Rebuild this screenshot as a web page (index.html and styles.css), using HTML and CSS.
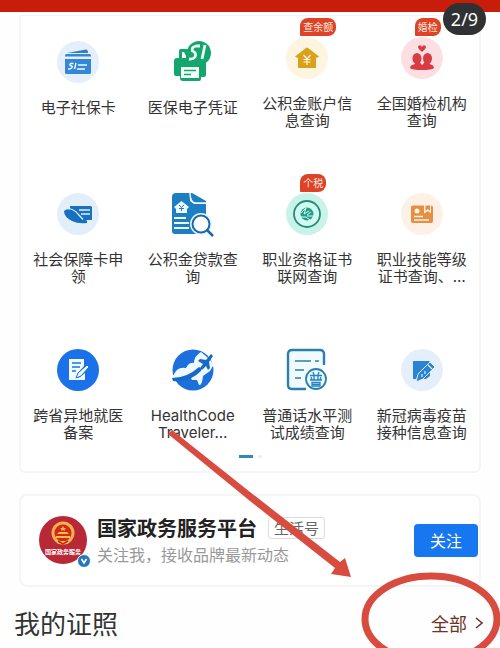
FILE: index.html
```html
<!DOCTYPE html>
<html lang="zh-CN">
<head>
<meta charset="utf-8">
<meta name="viewport" content="width=device-width, initial-scale=1">
<title>国家政务服务平台</title>
<link rel="stylesheet" href="styles.css">
</head>
<body>
<div class="page">
  <header class="topbar"><span class="counter">2/9</span></header>

  <main>
    <section class="card services">
      <div class="grid">
        <a class="item short" href="#">
          <svg class="icon" viewBox="0 0 42 42"><circle cx="21" cy="21" r="21" fill="#e4effb"/><path d="M10 12 29 8.500Q31 8.500 31 12Z" fill="#347fb9"/><path d="M8 14.500Q8 13 9.500 13H32.500Q34 13 34 14.500V15.500H8ZM8 18H34V31.500Q34 33 32.500 33H9.500Q8 33 8 31.500Z" fill="#3486d6"/><path d="M16.500 22.500H13.500Q12 24.500 14.500 25T13 28H11M19 22 17.500 28M21 24H30M20 28H28" fill="none" stroke="#f2faff" stroke-width="1.400"/></svg>
          <span class="label">电子社保卡</span>
        </a>
        <a class="item short" href="#">
          <svg class="icon" viewBox="0 0 42 42"><path d="M7 17V10Q7 8 9 8H18V18H7Z" fill="#14a66c"/><path d="M10 17V11H12L14 15V17Z" fill="#fff"/><path d="M5 17H31Q34 17 34 20V34Q34 36 32 36H29V38Q29 40 27 40H11Q8 40 8 37V35H4Q2 35 2 33V20Q2 17 5 17Z" fill="#14a66c"/><circle cx="27" cy="12" r="12" fill="#14a66c"/><path d="M28 5H24Q19 6 20.500 10Q25 12 23 16Q21 18.500 17 18M33 4 30 18" fill="none" stroke="#effff8" stroke-width="2.800"/><path d="M9 26H27V37H9Z" fill="#f3fff9"/><path d="M12 29.500H24M12 33.500H19" stroke="#14a66c" stroke-width="1.600"/></svg>
          <span class="label">医保电子凭证</span>
        </a>
        <a class="item" href="#">
          <span class="badge">查余额</span>
          <svg class="icon" viewBox="0 0 42 42"><circle cx="21" cy="21" r="21" fill="#fdf5df"/><path d="M9 19.500 20 11Q21 10 22 11L33 19.500 31 21 30 20V31H12V20L11 21Z" fill="#daa11d"/><path d="M17.500 18 21 22 24.500 18M21 22V28M17.500 22.500H24.500M17.500 25H24.500" stroke="#fff8df" stroke-width="1.200" fill="none"/></svg>
          <span class="label">公积金账户信<br>息查询</span>
        </a>
        <a class="item" href="#">
          <span class="badge">婚检</span>
          <svg class="icon" viewBox="0 0 42 42"><circle cx="21" cy="21" r="21" fill="#fbdfe2"/><g fill="#d93b42"><path d="M21 15Q15 10 18 8.500Q20 7.500 21 10Q22 7.500 24 8.500Q27 10 21 15Z"/><ellipse cx="16" cy="21.500" rx="4.500" ry="5.500"/><ellipse cx="26.500" cy="21.500" rx="4.500" ry="5.500"/><path d="M14 25H18.500L21 28 24 25H28.500V27Q33 28 33 31Q31 33 21 33T9 31Q9 28 14 27Z"/></g></svg>
          <span class="label">全国婚检机构<br>查询</span>
        </a>

        <a class="item" href="#">
          <svg class="icon" viewBox="0 0 42 42"><circle cx="21" cy="21" r="21" fill="#e2eef9"/><path d="M13 13H34L35 14V27H22L13 18Z" fill="#1c71bd"/><path d="M22 17H33M24 21H33" stroke="#d9efff" stroke-width="1.400"/><path d="M7 18Q10 15 14 17Q18 19 21 23Q24 26 30 27.500V30Q21 31 15 28Q7 24 7 18Z" fill="#176fc1"/><path d="M12 15.500Q18 17 21 21L26 26.500" fill="none" stroke="#e2f4ff" stroke-width="1.200"/></svg>
          <span class="label">社会保障卡申<br>领</span>
        </a>
        <a class="item" href="#">
          <svg class="icon" viewBox="0 0 42 42"><path d="M4 0H18V8L22 11H34V38Q34 41 31 41H3Q0 41 0 38V4Q0 0 4 0Z" fill="#1d7fc1"/><path d="M20 0 34 8V10H24Q18 9 18 0Z" fill="#1d7fc1"/><path d="M18 0Q18 10 24 10H34" fill="none" stroke="#e8f8ff" stroke-width="1.500"/><path d="M2 14 9.500 8 17 14 15 16V20H4V16Z" fill="#edf9ff"/><path d="M7 12 9.500 14.500 12 12M9.500 14.500V18M7 15.500H12" fill="none" stroke="#1d7fc1"/><path d="M2 25H14M2 30H17M2 35H17" stroke="#edf9ff" stroke-width="1.800"/><circle cx="29" cy="31" r="11" fill="#e6f7ff"/><path d="m35 37 6 6" stroke="#1769ac" stroke-width="2.500"/><circle cx="29" cy="31" r="8.500" fill="#fff" stroke="#1769ac" stroke-width="2"/></svg>
          <span class="label">公积金贷款查<br>询</span>
        </a>
        <a class="item" href="#">
          <span class="badge">个税</span>
          <svg class="icon" viewBox="0 0 42 42"><circle cx="21" cy="21" r="21" fill="#c9f2e9"/><circle cx="21" cy="21" r="13" fill="#d2faf0" stroke="#258c7c" stroke-width="1.800"/><circle cx="21" cy="21" r="6.500" fill="#229d88"/><path d="M15 20 20 15 18 21 23 18M21 22 25 19M15 24H20L24 27M21 23H27" fill="none" stroke="#d2faf0"/></svg>
          <span class="label">职业资格证书<br>联网查询</span>
        </a>
        <a class="item" href="#">
          <svg class="icon" viewBox="0 0 42 42"><circle cx="21" cy="21" r="21" fill="#fdf1e7"/><path d="M12 12.500H23V20.500L27 18 30 20.500V12.500Q32 12.500 32 14V28Q32 30 30 30H12Q10 30 10 28V14.500Q10 12.500 12 12.500Z" fill="#e68e42"/><path d="M24.500 12.500H29V18L27 16 24.500 18Z" fill="#e68e42"/><path d="M13 23.500H22M13 27H28" stroke="#fff1e3" stroke-width="1.500"/><circle cx="16" cy="18" r="2.500" fill="#fff1e3"/></svg>
          <span class="label">职业技能等级<br>证书查询、…</span>
        </a>

        <a class="item" href="#">
          <svg class="icon" viewBox="0 0 42 42"><circle cx="21" cy="21" r="21" fill="#1b71e9"/><path d="M12 10H27V17L20 25V29L23 28 28 24V31H12Z" fill="#f0faff"/><path d="M15 14H24M15 18H23M15 22H19" stroke="#1b71e9" stroke-width="1.400"/><path d="m19 29 2-5 9-8 2 2-8 9Z" fill="#f0faff" stroke="#1b71e9"/></svg>
          <span class="label">跨省异地就医<br>备案</span>
        </a>
        <a class="item" href="#">
          <svg class="icon" viewBox="0 0 42 42"><circle cx="21" cy="21" r="20.500" fill="#1c70dc"/><path d="M1 27Q5 17 14 19Q17 13 22 14Q22 7 29 3L35 8 42 15 38 22 31 27Q30 37 27 36L25 31 20 31 18 27 9 31 0 32Z" fill="#effaff"/><path d="M0 29Q15 29 27 18Q30 19 29 22Q17 34 1 32Z" fill="#1769c8"/><path d="M31 15 26 12 28 10 34 11 39 5 41 7 37 13 38 19 36 21 34 17 30 21 28 19Z" fill="#1769c8"/></svg>
          <span class="label">HealthCode<br>Traveler…</span>
        </a>
        <a class="item" href="#">
          <svg class="icon" viewBox="0 0 42 42"><path d="M38 16V5Q38 1 34 1H6Q2 1 2 5V36Q2 40 6 40H20" fill="#f1fbff" stroke="#2c7fab" stroke-width="2.400"/><path d="M9 12H25M29 12H33M9 21H18M9 29H15" stroke="#2c7fab" stroke-width="1.600"/><circle cx="30" cy="30" r="10" fill="#e8f8ff" stroke="#2c7fab" stroke-width="1.800"/><path d="M27 23 28 26M33 23 32 26M24 26.500H36M28 26V31M32 26V31M25 28 26 31M35 28 34 31M24 31H36M26 33.500H34V37H26ZM26 35.300H34" fill="none" stroke="#2682c1" stroke-width="1.300"/></svg>
          <span class="label">普通话水平测<br>试成绩查询</span>
        </a>
        <a class="item" href="#">
          <svg class="icon" viewBox="0 0 42 42"><circle cx="21" cy="21" r="21" fill="#e5effb"/><path d="M12 12H28L29 13V27L25 30H12Z" fill="#2a84d3"/><path d="m15 33 2-8 12-12 5 5-12 12Z" fill="#2a84d3" stroke="#e5effb"/><path d="m27 16 4 4M24 22v3M21 25v3" stroke="#e5effb" stroke-width="1.200"/></svg>
          <span class="label">新冠病毒疫苗<br>接种信息查询</span>
        </a>
      </div>
      <div class="dots"><span class="dot active"></span><span class="dot"></span></div>
    </section>

    <section class="card account">
      <div class="avatar">
        <svg viewBox="0 0 48 48"><circle cx="24" cy="24" r="24" fill="#b92837"/><circle cx="24" cy="17" r="10" fill="#d5261e" stroke="#efb24c" stroke-width="3"/><path d="M17 20H31V22H17ZM20 16H28L30 18H18ZM24 10 25 12H27L25.500 13.500 26 15 24 14 22 15 22.500 13.500 21 12H23ZM17 25H31L29 28H19Z" fill="#f2bd4b"/><path d="M19 25 24 28 29 25" fill="none" stroke="#c8251f" stroke-width="1.500"/><text class="seal" x="24" y="38" text-anchor="middle">国家政务服务</text></svg>
        <svg class="verified" viewBox="0 0 14 14"><circle cx="7" cy="7" r="6.500" fill="#2478b6" stroke="#fff"/><path d="M4.500 5 7 9 9.500 5" fill="none" stroke="#fff" stroke-width="1.600"/></svg>
      </div>
      <div class="info">
        <div class="name-row"><h2>国家政务服务平台</h2><span class="tag">生活号</span></div>
        <p>关注我，接收品牌最新动态</p>
      </div>
      <button class="follow" type="button">关注</button>
    </section>

    <section class="licenses">
      <h1>我的证照</h1>
      <a class="all" href="#">全部<svg viewBox="0 0 8 12"><path d="m1 1 6 5-6 5" fill="none" stroke="currentColor" stroke-width="1.500"/></svg></a>
    </section>
  </main>

  <svg class="marks" viewBox="0 0 500 648" aria-hidden="true">
    <path d="M172 430 250 492 340 562 345 558 351 577 331 574 335 568 250 501 168 434Z" fill="#d84c40"/>
    <ellipse cx="431" cy="619" rx="66" ry="43" fill="none" stroke="#d84c40" stroke-width="7"/>
  </svg>
</div>
</body>
</html>
```
FILE: styles.css
```css
* { box-sizing: border-box; }

body {
  margin: 0;
  background: #fefefe;
  color: #333;
  font-family: "Noto Sans CJK SC", sans-serif;
}

a { color: inherit; text-decoration: none; }
h1, h2, p { margin: 0; font-weight: 400; }

.page { position: relative; min-height: 100vh; overflow: hidden; }

.topbar {
  position: relative;
  height: 12px;
  background: #c81d0a;
}

.counter {
  position: absolute;
  z-index: 1;
  top: 3px;
  right: 14px;
  width: 43px;
  border-radius: 16px;
  background: #303133;
  color: #fff;
  font-family: "Noto Sans", sans-serif;
  font-size: 18px;
  line-height: 32px;
  text-align: center;
}

main { padding-top: 3px; }

.card {
  margin: 0 19px;
  border: 2px solid #f5f5f5;
  border-radius: 8px;
  background: #fff;
}

.services { padding: 21px 0 13px; border-radius: 0 0 6px 6px; border-top-width: 1px; }

.grid {
  display: grid;
  grid-template-columns: repeat(4, 1fr);
  row-gap: 64px;
}

.item {
  position: relative;
  display: flex;
  flex-direction: column;
  align-items: center;
  gap: 16px;
}

.short { padding-top: 4px; }

.icon { width: 42px; height: 42px; overflow: visible; }

.label {
  font-family: Inter, "Noto Sans CJK SC", sans-serif;
  font-size: 15px;
  line-height: 17px;
  text-align: center;
  white-space: nowrap;
}

.badge {
  position: absolute;
  z-index: 1;
  top: -19px;
  left: calc(50% - 7px);
  padding: 0 3px;
  border-radius: 8px 8px 8px 1px;
  background: #dc4327;
  color: #ffe9df;
  font-size: 10px;
  line-height: 18px;
}

.dots { display: flex; justify-content: center; gap: 5px; margin-top: 14px; }
.dot { width: 4px; height: 3px; border-radius: 2px; background: #e9edf0; }
.active { width: 14px; border-radius: 0; background: #3488b5; }

.account {
  display: flex;
  align-items: center;
  margin-top: 21px;
  padding: 18px 1px 19px 18px;
}

.avatar { position: relative; width: 48px; height: 48px; flex: none; }
.avatar svg { display: block; }
.avatar .verified { position: absolute; right: -4px; bottom: -4px; width: 14px; height: 14px; }
.seal { fill: #fff; font-size: 6px; font-weight: 700; }

.info { flex: 1; margin-left: 10px; min-width: 0; }
.name-row { display: flex; align-items: center; gap: 11px; }
h2 { font-size: 20px; font-weight: 700; line-height: 28px; color: #222; white-space: nowrap; }

.tag {
  padding: 0 5px;
  border: 1px solid #ddd;
  border-radius: 3px;
  color: #666;
  font-size: 15px;
  line-height: 20px;
  white-space: nowrap;
}

.info p { color: #999; font-size: 16px; line-height: 24px; white-space: nowrap; }

.follow {
  width: 64px;
  height: 33px;
  padding: 0;
  border: 0;
  border-radius: 4px;
  background: #1677f0;
  color: #fff;
  font: 16px "Noto Sans CJK SC", sans-serif;
}

.licenses {
  display: flex;
  align-items: center;
  justify-content: space-between;
  padding: 16px 17px 0 14px;
}

h1 { font-size: 26px; line-height: 40px; }
.all { display: flex; align-items: center; gap: 8px; color: #6b3325; font-size: 18px; line-height: 40px; }
.all svg { width: 8px; height: 12px; }

.marks {
  position: absolute;
  z-index: 2;
  top: 0;
  left: 0;
  width: 100%;
  pointer-events: none;
}
```
